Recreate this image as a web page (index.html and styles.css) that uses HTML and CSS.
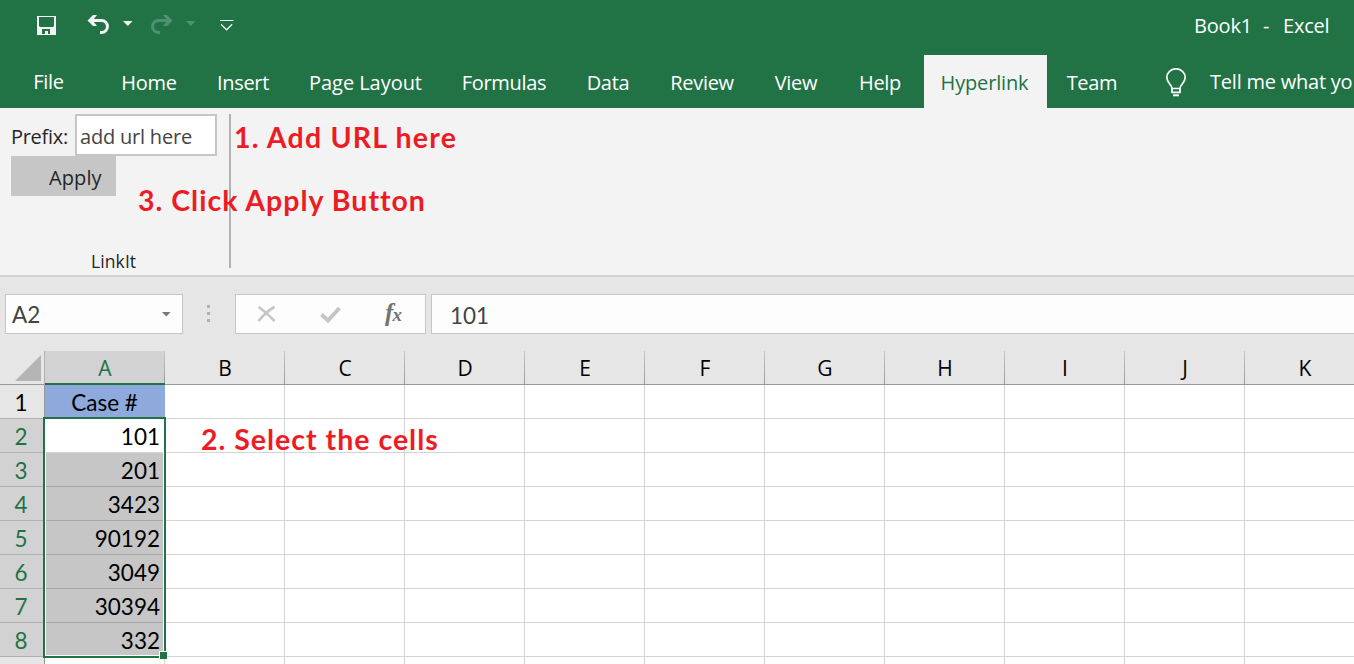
FILE: index.html
```
<!DOCTYPE html>
<html lang="en">
<head>
<meta charset="utf-8">
<title>Book1 - Excel</title>
<link rel="stylesheet" href="styles.css">
</head>
<body>
<div class="app">
  <header class="titlebar">
    <svg class="quick" width="260" height="55" viewBox="0 0 260 55">
      <path fill="#f3f3f3" fill-rule="evenodd" d="M37 16h19v19H37zM39 17h15v9l-1 1H40l-1-1zM42 29v5h3v-3h3v3h2v-5z"/>
      <path fill="none" stroke="#f3f3f3" stroke-width="3" d="M90 20.500h11.500a6 6 0 0 1 0 12H100"/>
      <path fill="#f3f3f3" d="M87.500 20.500L93 15h4l-4.500 5.500L97 26h-4z"/>
      <path fill="#f3f3f3" d="M123 21h9.500l-4.700 5z"/>
      <path fill="none" stroke="#4f9170" stroke-width="3" d="M170 20.500h-11.500a6 6 0 0 0 0 12H160"/>
      <path fill="#4f9170" d="M172.500 20.500L167 15h-4l4.500 5.500L163 26h4z"/>
      <path fill="#4f9170" d="M186 21h9.500l-4.700 5z"/>
      <path fill="none" stroke="#f3f3f3" stroke-width="1.200" d="M220 20.500h13.500M221 24.300l5.600 5.500 5.600-5.500"/>
    </svg>
    <div class="title"><span class="t-book">Book1</span><span class="t-dash">-</span><span class="t-app">Excel</span></div>
  </header>
  <nav class="tabs">
    <span class="tab file">File</span>
    <span class="tab home">Home</span>
    <span class="tab insert">Insert</span>
    <span class="tab layout">Page Layout</span>
    <span class="tab formulas">Formulas</span>
    <span class="tab data">Data</span>
    <span class="tab review">Review</span>
    <span class="tab view">View</span>
    <span class="tab help">Help</span>
    <span class="tab hyperlink">Hyperlink</span>
    <span class="tab team">Team</span>
    <svg class="bulb" width="22" height="30" viewBox="0 0 22 30">
      <path fill="none" stroke="#fff" stroke-width="1.700" d="M7 20.500c0-4-5.200-5.500-5.200-11a9.200 8.700 0 0 1 18.400 0c0 5.500-5.200 7-5.200 11zM7 20v4.300h8V20"/>
      <path fill="#fff" d="M8 26.300h6v2H8z"/>
    </svg>
    <span class="tell">Tell me what yo</span>
  </nav>
  <section class="ribbon">
    <div class="group">
      <div class="field"><span class="prefix">Prefix:</span><span class="input">add url here</span></div>
      <div class="apply">Apply</div>
      <div class="group-name">LinkIt</div>
    </div>
    <div class="note note-url">1. Add URL here</div>
    <div class="note note-apply">3. Click Apply Button</div>
  </section>
  <section class="formula">
    <div class="namebox"><span>A2</span><svg width="9" height="5" viewBox="0 0 9 5"><path fill="#777" d="M0 0h8.500L4.250 4.500z"/></svg></div>
    <div class="dots"><i></i><i></i><i></i></div>
    <div class="tools">
      <svg width="189" height="38" viewBox="0 0 189 38">
        <path fill="none" stroke="#c5c5c5" stroke-width="2.600" d="M22.500 12c5 3 11 9 16 14M38.500 12c-6 3-11 8-16 14"/>
        <path fill="none" stroke="#c5c5c5" stroke-width="4" d="M85.500 19.500l6.500 6L103.500 13"/>
        <text class="fx" x="149" y="25.500">f</text><text class="fx fx-x" x="156.500" y="26">x</text>
      </svg>
    </div>
    <div class="value">101</div>
  </section>
  <main class="sheet">
    <div class="row heads">
      <div class="corner"><svg width="26" height="26" viewBox="0 0 26 26"><path fill="#b4b4b4" d="M26 0v26H0z"/></svg></div>
      <div class="head on">A</div><div class="head">B</div><div class="head">C</div><div class="head">D</div><div class="head">E</div><div class="head">F</div><div class="head">G</div><div class="head">H</div><div class="head">I</div><div class="head">J</div><div class="head">K</div>
    </div>
    <div class="row"><div class="num">1</div><div class="cell case">Case #</div><div class="cells"></div></div>
    <div class="row"><div class="num on">2</div><div class="cell">101</div><div class="cells"></div></div>
    <div class="row"><div class="num on">3</div><div class="cell sel">201</div><div class="cells"></div></div>
    <div class="row"><div class="num on">4</div><div class="cell sel">3423</div><div class="cells"></div></div>
    <div class="row"><div class="num on">5</div><div class="cell sel">90192</div><div class="cells"></div></div>
    <div class="row"><div class="num on">6</div><div class="cell sel">3049</div><div class="cells"></div></div>
    <div class="row"><div class="num on">7</div><div class="cell sel">30394</div><div class="cells"></div></div>
    <div class="row"><div class="num on">8</div><div class="cell sel">332</div><div class="cells"></div></div>
    <div class="row"><div class="num"></div><div class="cell"></div><div class="cells"></div></div>
    <div class="selection"><i class="handle"></i></div>
    <div class="note note-cells">2. Select the cells</div>
  </main>
</div>
</body>
</html>
```
FILE: styles.css
```
* { box-sizing: border-box; }
body { margin: 0; overflow: hidden; }
.app { width: 1354px; height: 664px; overflow: hidden; background: #e6e6e6; font-family: "Open Sans", "Noto Sans", sans-serif; font-size: 20px; color: #262626; }
svg { display: block; flex: none; }
.titlebar { height: 55px; background: #217346; display: flex; justify-content: space-between; color: #fff; }
.title { display: flex; width: 160px; line-height: 51px; letter-spacing: -0.2px; white-space: nowrap; }
.t-book { width: 69px; }
.t-dash { width: 20px; }
.tabs { height: 53px; background: #217346; display: flex; color: #fff; line-height: 55px; letter-spacing: -0.3px; white-space: nowrap; overflow: hidden; }
.tab { flex: none; text-align: center; }
.file { width: 97px; line-height: 53px; }
.home { width: 104px; }
.insert { width: 84px; }
.layout { width: 161px; letter-spacing: -0.05px; }
.formulas { width: 116px; }
.data { width: 92px; }
.review { width: 96px; }
.view { width: 92px; }
.help { width: 82px; padding-right: 6px; }
.hyperlink { width: 123px; padding-right: 2px; background: #f3f3f3; color: #217346; letter-spacing: -0.15px; }
.team { width: 90px; }
.bulb { margin: 13px 0 0 28px; }
.tell { margin-left: 23px; line-height: 53px; letter-spacing: -0.22px; }
.ribbon { position: relative; height: 169px; background: #f3f3f3; border-bottom: 2px solid #d2d2d2; padding: 6px 0 0 11px; }
.group { width: 220px; height: 154px; border-right: 2px solid #b1b1b1; display: flex; flex-direction: column; letter-spacing: -0.2px; }
.field { display: flex; height: 42px; line-height: 45px; }
.prefix { width: 64px; letter-spacing: -0.3px; }
.input { width: 142px; height: 42px; border: 2px solid #c6c6c6; background: #fff; color: #444; line-height: 41px; padding-left: 3px; white-space: nowrap; }
.apply { width: 105px; height: 40px; background: #c6c6c6; line-height: 43px; padding-left: 38px; letter-spacing: 0.1px; }
.group-name { margin-top: 52px; padding-left: 80px; font-size: 17.5px; line-height: 26px; letter-spacing: 0.1px; }
.note { position: absolute; font: bold 28.500px/36px Lato, sans-serif; letter-spacing: 1px; color: #ed1c24; white-space: nowrap; }
.note-url { left: 234px; top: 11px; letter-spacing: 1.200px; }
.note-apply { left: 138px; top: 74px; }
.note-cells { left: 201px; top: 70px; }
.formula { height: 57px; margin-top: 17px; display: flex; font: 22.500px/41px Lato, sans-serif; color: #444; }
.namebox { width: 178px; height: 40px; margin-left: 5px; border: 1px solid #c6c6c6; background: #fdfdfd; display: flex; align-items: center; justify-content: space-between; padding: 0 11px 0 6px; }
.dots { width: 52px; height: 40px; display: flex; flex-direction: column; align-items: center; gap: 4px; padding: 11px 2px 0 0; }
.dots i { width: 3px; height: 3px; background: #b1b1b1; }
.tools { width: 191px; height: 40px; border: 1px solid #c6c6c6; background: #fdfdfd; }
.fx { font: italic bold 25px "Liberation Serif", serif; fill: #737373; }
.fx-x { font-size: 19px; }
.value { flex: 1; height: 40px; margin-left: 5px; border: 1px solid #c6c6c6; border-right: 0; background: #fdfdfd; padding-left: 18px; }
.sheet { position: relative; height: 313px; font: 22.500px/36px Lato, sans-serif; color: #000; }
.row { display: flex; height: 34px; }
.corner { width: 45px; height: 34px; border-bottom: 1px solid #999; border-right: 1px solid #b1b1b1; padding: 4px 0 0 15px; flex: none; }
.head { position: relative; flex: none; width: 120px; height: 34px; border-bottom: 1px solid #999; text-align: center; line-height: 35px; font-family: "Open Sans", sans-serif; font-size: 21px; background: linear-gradient(#c8c8c8, #999) right / 1px 100% no-repeat; }
.head.on { background-color: #d2d2d2; color: #217346; border-bottom: 2px solid #217346; }
.num { width: 45px; flex: none; border-right: 1px solid #999; border-bottom: 1px solid #b1b1b1; text-align: center; padding-right: 2px; }
.num.on { background: #d2d2d2; color: #217346; }
.cell { width: 120px; flex: none; border-right: 1px solid #d4d4d4; border-bottom: 1px solid #d4d4d4; background: #fff; text-align: right; padding-right: 4px; }
.case { background: #8ea9db; border-color: #8ea9db; text-align: center; padding: 0; }
.sel { background: #c6c6c6; border-bottom-color: #a6a6a6; }
.cells { flex: 1; border-bottom: 1px solid #d4d4d4; background: repeating-linear-gradient(90deg, #fff 0 119px, #d4d4d4 119px 120px); }
.selection { position: absolute; left: 43px; top: 66px; width: 123px; height: 241px; border: 2px solid #217346; box-shadow: inset 0 0 0 1px #fff; }
.handle { position: absolute; right: -3px; bottom: -3px; width: 8px; height: 8px; background: #217346; border: solid #fff; border-width: 1px 0 0 1px; }
```
